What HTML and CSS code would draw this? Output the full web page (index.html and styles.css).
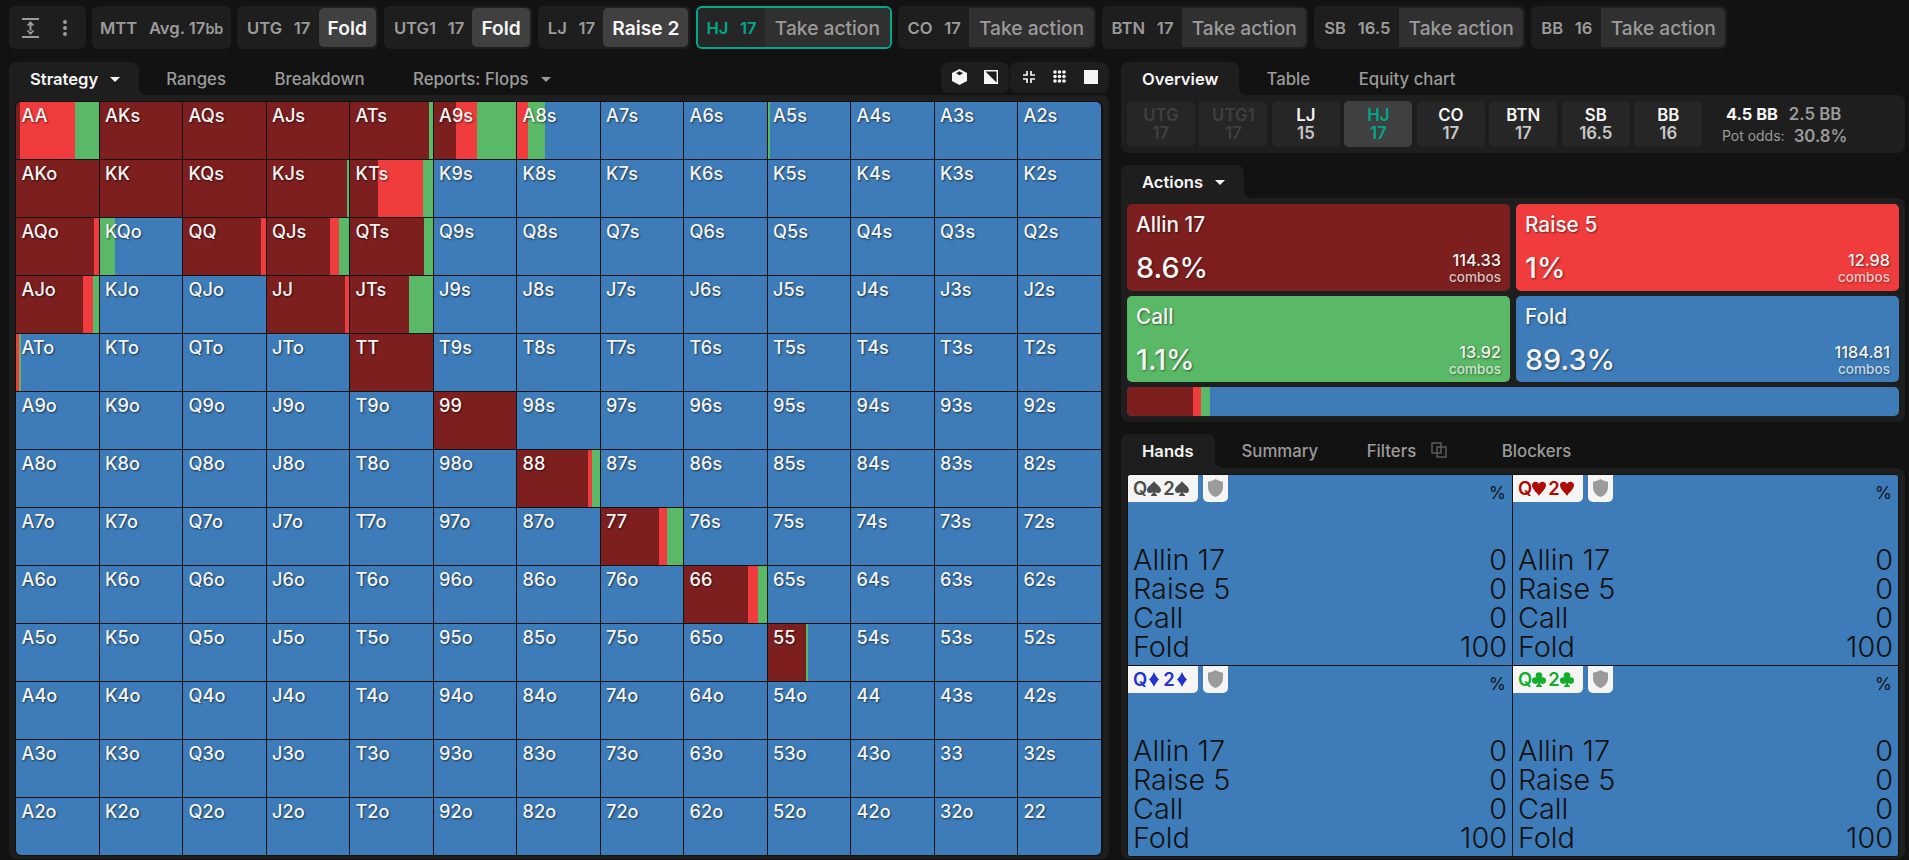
FILE: index.html
```html
<!DOCTYPE html>
<html lang="en">

<head>
    <meta charset="UTF-8">
    <meta name="viewport" content="width=device-width, initial-scale=1.0">
    <title>Strategy</title>
    <link rel="stylesheet" href="styles.css">
</head>

<body>
    <!-- Shared icons -->
    <svg class="sprite" width="0" height="0">
        <symbol id="spade" viewBox="0 0 14 15"><path d="M7 0C8 2.6 14 5.400 14 9.200c0 2.600-3.400 3.900-5.900 1.900.2 1.400.8 2.300 1.900 3V15H4v-.9c1.100-.7 1.700-1.600 1.900-3C3.400 13.100 0 11.800 0 9.200 0 5.400 6 2.600 7 0z"/></symbol>
        <symbol id="heart" viewBox="0 0 14 15"><path d="M7 15C6 12.500 0 8.500 0 4.300 0 .2 5.300-.5 7 3c1.700-3.500 7-2.800 7 1.300C14 8.500 8 12.500 7 15z"/></symbol>
        <symbol id="diamond" viewBox="0 0 14 15"><path d="M7 0c1.200 3 3 5.500 5 7.500-2 2-3.800 4.500-5 7.500-1.200-3-3-5.500-5-7.500C4 5.500 5.800 3 7 0z"/></symbol>
        <symbol id="club" viewBox="0 0 14 15"><circle cx="7" cy="3.600" r="3.300"/><circle cx="3.300" cy="8.600" r="3.300"/><circle cx="10.700" cy="8.600" r="3.300"/><path d="M5.500 5h3L8 11c.2 1.400.8 2.400 2 3.100V15H4v-.9c1.200-.7 1.800-1.700 2-3.100z"/></symbol>
        <symbol id="shield" viewBox="0 0 15 18"><path d="M7.500 0c2.300 1.500 4.700 2.300 7.500 2.700V8c0 4.700-2.600 8.300-7.500 10C2.600 16.300 0 12.700 0 8V2.700C2.800 2.300 5.200 1.500 7.500 0z"/></symbol>
    </svg>

    <!-- Action line -->
    <div class="topbar">
        <div class="pill tools">
            <svg width="17" height="20" viewBox="0 0 17 20" fill="#9b9b9b"><path d="M0 0h17v2H0zM0 18h17v2H0zM7.500 6h2v8h-2zM8.500 3l4 4.500h-8zM8.500 17l4-4.500h-8z"/></svg>
            <svg width="4" height="16" viewBox="0 0 4 16" fill="#9b9b9b"><circle cx="2" cy="2" r="2"/><circle cx="2" cy="8" r="2"/><circle cx="2" cy="14" r="2"/></svg>
        </div>
        <div class="pill mtt"><b>MTT</b><b>Avg. 17<small>bb</small></b></div>
        <div class="pill"><b>UTG</b><b>17</b><span class="move done">Fold</span></div>
        <div class="pill"><b>UTG1</b><b>17</b><span class="move done">Fold</span></div>
        <div class="pill"><b>LJ</b><b>17</b><span class="move done">Raise 2</span></div>
        <div class="pill current"><b>HJ</b><b>17</b><span class="move">Take action</span></div>
        <div class="pill"><b>CO</b><b>17</b><span class="move">Take action</span></div>
        <div class="pill"><b>BTN</b><b>17</b><span class="move">Take action</span></div>
        <div class="pill"><b>SB</b><b>16.5</b><span class="move">Take action</span></div>
        <div class="pill"><b>BB</b><b>16</b><span class="move">Take action</span></div>
    </div>

    <div class="main">
        <div class="left">
            <div class="tabs">
                <div class="tab active with-caret">Strategy <i class="caret"></i></div>
                <div class="tab">Ranges</div>
                <div class="tab">Breakdown</div>
                <div class="tab">Reports: Flops <i class="caret"></i></div>
                <div class="view-group first">
                    <svg width="15" height="16" viewBox="0 0 15 16"><path d="M7.500 0 15 4v8l-7.500 4L0 12V4z" fill="#f5f5f5"/><path d="M7.500 2.300 11 4.200 7.500 6.200 4 4.200z" fill="#1e1e1e"/></svg>
                    <svg width="14" height="14" viewBox="0 0 14 14"><path d="M.7.700h12.600v12.600H.7z" fill="none" stroke="#f5f5f5" stroke-width="1.400"/><path d="M0 0l14 14H0z" fill="#f5f5f5"/></svg>
                </div>
                <div class="view-group">
                    <svg width="12" height="12" viewBox="0 0 12 12"><path d="M0 4h4V0M8 0v4h4M12 8H8v4M4 12V8H0" fill="none" stroke="#f5f5f5" stroke-width="1.700"/></svg>
                    <svg width="13" height="13" viewBox="0 0 13 13" fill="#f5f5f5"><circle cx="2" cy="2" r="1.800"/><circle cx="6.500" cy="2" r="1.800"/><circle cx="11" cy="2" r="1.800"/><circle cx="2" cy="6.500" r="1.800"/><circle cx="6.500" cy="6.500" r="1.800"/><circle cx="11" cy="6.500" r="1.800"/><circle cx="2" cy="11" r="1.800"/><circle cx="6.500" cy="11" r="1.800"/><circle cx="11" cy="11" r="1.800"/></svg>
                    <svg width="14" height="14" viewBox="0 0 14 14"><path d="M0 0h14v14H0z" fill="#f5f5f5"/></svg>
                </div>
            </div>
            <div class="panel grid-panel">
                <div class="hand-grid" id="hand-grid"></div>
            </div>
        </div>

        <div class="right">
            <div class="tabs">
                <div class="tab active">Overview</div>
                <div class="tab">Table</div>
                <div class="tab">Equity chart</div>
            </div>
            <div class="panel overview">
                <div class="seat out">UTG<span>17</span></div>
                <div class="seat out">UTG1<span>17</span></div>
                <div class="seat">LJ<span>15</span></div>
                <div class="seat hero">HJ<span>17</span></div>
                <div class="seat">CO<span>17</span></div>
                <div class="seat">BTN<span>17</span></div>
                <div class="seat">SB<span>16.5</span></div>
                <div class="seat">BB<span>16</span></div>
                <div class="pot">
                    <div class="pot-size"><b>4.5 BB</b><span>2.5 BB</span></div>
                    <div class="pot-odds">Pot odds:<b>30.8%</b></div>
                </div>
            </div>

            <div class="tabs actions-tabs">
                <div class="tab active with-caret">Actions <i class="caret"></i></div>
            </div>
            <div class="panel actions">
                <div class="action allin"><h3>Allin 17</h3><strong>8.6%</strong><p>114.33<span>combos</span></p></div>
                <div class="action raise"><h3>Raise 5</h3><strong>1%</strong><p>12.98<span>combos</span></p></div>
                <div class="action call"><h3>Call</h3><strong>1.1%</strong><p>13.92<span>combos</span></p></div>
                <div class="action fold"><h3>Fold</h3><strong>89.3%</strong><p>1184.81<span>combos</span></p></div>
                <div class="total-bar">
                    <div class="allin" style="width: 8.6%"></div>
                    <div class="raise" style="width: 1%"></div>
                    <div class="call" style="width: 1.1%"></div>
                </div>
            </div>

            <div class="tabs hands-tabs">
                <div class="tab active">Hands</div>
                <div class="tab">Summary</div>
                <div class="tab">Filters <svg class="copy" width="16" height="16" viewBox="0 0 16 16"><path d="M1 1h9v10H1zM6 5h9v10H6z" fill="none" stroke="#5c5c5c" stroke-width="1.500"/></svg></div>
                <div class="tab">Blockers</div>
            </div>
            <div class="panel hands-panel">
                <div class="combos" id="combos"></div>
            </div>
        </div>
    </div>

    <script src="script.js"></script>
</body>

</html>
```
FILE: script.js
```js
const ranks = "AKQJT98765432";

// cumulative stops in %: [allin, raise, call], the rest is fold
const strategy = {
    AA: [4.6, 71, 100], AKs: [100], AQs: [100], AJs: [100], ATs: [95, 95, 100],
    A9s: [27, 52.5, 100], A8s: [0, 13.4, 33.6], A5s: [0, 0, 2],
    AKo: [100], KK: [100], KQs: [100], KJs: [97, 97, 100], KTs: [34, 87.5, 100],
    AQo: [94, 100], KQo: [0, 0, 18], QQ: [94, 100], QJs: [76.5, 88, 100], QTs: [89, 89, 100],
    AJo: [80.6, 92.2, 100], JJ: [95, 100], JTs: [71, 71, 100],
    ATo: [0, 3.7, 6.5], TT: [100], 99: [100],
    88: [85.5, 90.4, 100], 77: [70.7, 80, 100], 66: [77, 88.7, 100], 55: [46, 46, 48.3]
};

function background(stops) {
    const names = ["allin", "raise", "call"];
    let from = 0;
    const parts = [];
    stops.forEach((to, i) => {
        if (to > from) parts.push(`var(--${names[i]}) ${from}% ${to}%`);
        from = to;
    });
    if (from < 100) parts.push(`var(--fold) ${from}% 100%`);
    return `linear-gradient(to right, ${parts.join(", ")})`;
}

const grid = document.getElementById("hand-grid");
for (let r = 0; r < 13; r++) {
    for (let c = 0; c < 13; c++) {
        const name = r === c ? ranks[r] + ranks[c] : c > r ? ranks[r] + ranks[c] + "s" : ranks[c] + ranks[r] + "o";
        const cell = document.createElement("div");
        cell.className = "cell";
        cell.textContent = name;
        if (strategy[name]) cell.style.background = background(strategy[name]);
        grid.appendChild(cell);
    }
}

document.getElementById("combos").innerHTML = ["spade", "heart", "diamond", "club"].map(suit => `
    <div class="combo">
        <div class="combo-head">
            <div class="cards ${suit}"><span>Q</span><svg><use href="#${suit}"/></svg><span>2</span><svg><use href="#${suit}"/></svg></div>
            <div class="blocker"><svg><use href="#shield"/></svg></div>
            <div class="unit">%</div>
        </div>
        <div class="row"><span>Allin 17</span><span>0</span></div>
        <div class="row"><span>Raise 5</span><span>0</span></div>
        <div class="row"><span>Call</span><span>0</span></div>
        <div class="row"><span>Fold</span><span>100</span></div>
    </div>`).join("");
```
FILE: styles.css
```css
:root {
    --allin: #7d1f1f;
    --raise: #f03c3c;
    --call: #5ab966;
    --fold: #3d7cb8;
    --panel: #1e1e1e;
    --teal: #00a88c;
}

* {
    box-sizing: border-box;
}

body {
    margin: 0;
    height: 860px;
    overflow: hidden;
    background-color: #121212;
    color: #f5f5f5;
    font-family: Inter, sans-serif;
    font-size: 16.8px;
}

.sprite {
    position: absolute;
}

/* Top bar */
.topbar {
    display: flex;
    gap: 6px;
    padding: 6px 9px 0;
    height: 49px;
}

.pill {
    display: flex;
    align-items: center;
    gap: 11.7px;
    height: 43px;
    padding: 0 2px 0 10px;
    background-color: var(--panel);
    border-radius: 6px;
    color: #9b9b9b;
    font-size: 16.6px;
    white-space: nowrap;
}

.pill b {
    font-weight: 600;
}

.pill small {
    font-size: 14.4px;
}

.tools {
    width: 77px;
    padding: 0 19px 0 13px;
    justify-content: space-between;
}

.mtt {
    width: 139px;
    padding: 0 0 0 8px;
}

.move {
    display: flex;
    align-items: center;
    height: 39px;
    margin-left: -3.5px;
    padding: 0 9.5px 0 10px;
    background-color: #303030;
    border-radius: 0 5px 5px 0;
    font-size: 19.2px;
    font-weight: 500;
}

.move.done {
    padding: 0 9px;
    background-color: #404040;
    border-radius: 5px;
    color: #f5f5f5;
    font-weight: 600;
}

.current {
    border: 2px solid var(--teal);
    background-color: #262626;
    padding: 0 0 0 8px;
}

.current b {
    color: var(--teal);
}

/* Tabs and panels */
.main {
    display: flex;
    gap: 12px;
    padding: 13px 4px 0 9px;
}

.left {
    width: 1100px;
}

.right {
    width: 784px;
}

.tabs {
    display: flex;
    height: 33px;
}

.tab {
    display: flex;
    align-items: center;
    padding: 0 21.5px;
    color: #9b9b9b;
    font-weight: 500;
    white-space: nowrap;
}

.tab + .tab {
    margin-left: 5.5px;
}

.tab.active {
    position: relative;
    padding: 0 21px;
    background-color: var(--panel);
    border-radius: 8px 8px 0 0;
    color: #f5f5f5;
    font-size: 16.6px;
    font-weight: 600;
}

.tab.with-caret {
    padding-right: 19px;
}

.tab.active::after {
    content: "";
    position: absolute;
    left: 100%;
    bottom: 0;
    width: 8px;
    height: 8px;
    background: radial-gradient(circle at 100% 0, transparent 8px, var(--panel) 8.5px);
}

.caret {
    margin: 2px 0 0 12px;
    border: 5px solid transparent;
    border-top-color: currentColor;
    border-bottom: 0;
}

.panel {
    background-color: var(--panel);
    border-radius: 0 8px 8px 8px;
}

.view-group {
    display: flex;
    align-items: center;
    justify-content: space-between;
    width: 99px;
    height: 31px;
    margin-left: 1px;
    padding: 0 11px 2px 13px;
    background-color: var(--panel);
    border-radius: 8px;
}

.view-group.first {
    width: 68px;
    margin-left: auto;
    padding: 0 11px 2px;
}

/* Hand grid */
.grid-panel {
    height: 764px;
    padding: 6px 6px 0;
}

.hand-grid {
    display: grid;
    grid-template-columns: repeat(13, 82.5px);
    grid-auto-rows: 57px;
    gap: 1px;
    padding: 1px;
    background-color: #121212;
    border-radius: 6px;
    overflow: hidden;
}

.cell {
    padding: 2px 5.5px;
    background-color: var(--fold);
    font-size: 18.2px;
    font-weight: 500;
    line-height: 22px;
    text-shadow: 1px 1px 2px rgba(0, 0, 0, 0.6);
}

.cell:first-child {
    border-top-left-radius: 5px;
}

.cell:nth-child(13) {
    border-top-right-radius: 5px;
}

.cell:nth-child(157) {
    border-bottom-left-radius: 5px;
}

.cell:last-child {
    border-bottom-right-radius: 5px;
}

/* Overview */
.overview {
    display: flex;
    gap: 4.7px;
    height: 58px;
    padding: 6px;
}

.seat {
    display: flex;
    flex-direction: column;
    justify-content: center;
    width: 67.8px;
    height: 46px;
    background-color: #262626;
    border-radius: 5px;
    font-weight: 600;
    line-height: 18px;
    text-align: center;
}

.seat span {
    color: #c8c8c8;
}

.seat.out,
.seat.out span {
    color: #404040;
}

.seat.hero {
    background-color: #404040;
}

.seat.hero,
.seat.hero span {
    color: var(--teal);
}

.pot {
    margin-left: 15px;
    color: #9b9b9b;
    font-weight: 600;
}

.pot-size {
    display: flex;
    gap: 11px;
    padding: 2px 0 0 4px;
    line-height: 22px;
}

.pot-size b {
    color: #f5f5f5;
    font-size: 16.4px;
    font-weight: 700;
}

.pot-odds {
    display: flex;
    gap: 9px;
    font-size: 14px;
    font-weight: 400;
    line-height: 22px;
}

.pot-odds b {
    font-size: 16.8px;
    font-weight: 600;
}

/* Actions */
.actions-tabs {
    margin-top: 12px;
}

.actions {
    display: grid;
    grid-template-columns: 1fr 1fr;
    grid-template-rows: 87px 86px 29px;
    gap: 5px 6px;
    height: 224px;
    padding: 6px 6px 0;
}

.allin {
    background-color: var(--allin);
}

.raise {
    background-color: var(--raise);
}

.call {
    background-color: var(--call);
}

.fold {
    background-color: var(--fold);
}

.action {
    display: grid;
    grid-template-columns: 1fr auto;
    grid-template-rows: 40px 1fr;
    padding: 0 9px;
    border-radius: 5px;
    text-shadow: 1px 1px 2px rgba(0, 0, 0, 0.5);
}

.action h3 {
    grid-column: span 2;
    margin: 0;
    font-size: 20.8px;
    font-weight: 500;
    line-height: 41px;
}

.action strong {
    font-size: 28.8px;
    font-weight: 500;
    line-height: 48px;
}

.action p {
    margin: 7px 0 0;
    font-size: 16.3px;
    font-weight: 500;
    line-height: 18px;
    text-align: right;
}

.action span {
    display: block;
    font-size: 13.6px;
    line-height: 17px;
    opacity: 0.75;
}

.total-bar {
    display: flex;
    grid-column: span 2;
    background-color: var(--fold);
    border-radius: 5px;
    overflow: hidden;
}

/* Hands */
.hands-tabs {
    margin-top: 12px;
    height: 34px;
}

.copy {
    margin: 0 6px 2px 15px;
}

.hands-panel {
    height: 391px;
    padding: 6px 6px 0;
}

.combos {
    display: grid;
    grid-template-columns: 384px 385px;
    grid-template-rows: 190px 190px;
    gap: 1px;
    padding: 1px;
    background-color: #121212;
    border-radius: 6px;
    overflow: hidden;
}

.combo {
    background-color: var(--fold);
    color: #121212;
}

.combo-head {
    display: flex;
    align-items: flex-start;
    gap: 5px;
    height: 70px;
}

.cards,
.blocker {
    display: flex;
    align-items: center;
    height: 27px;
    background-color: #f5f5f5;
    border-radius: 0 0 5px 5px;
}

.cards {
    width: 70px;
    padding: 0 0 1px 5px;
    border-bottom-left-radius: 0;
    font-size: 18.4px;
    font-weight: 600;
}

.cards svg {
    width: 14px;
    height: 15px;
    fill: currentColor;
}

.cards svg + span {
    margin-left: 2px;
}

.spade {
    color: #4d4d4d;
}

.heart {
    color: #ad0c05;
}

.diamond {
    color: #2433c8;
}

.club {
    color: #14ad2b;
}

.blocker {
    width: 25px;
    padding-bottom: 1px;
    justify-content: center;
}

.blocker svg {
    width: 15px;
    height: 18px;
    fill: #9b9b9b;
}

.unit {
    margin: 8px 6px 0 auto;
    font-size: 17.2px;
    line-height: 20px;
}

.row {
    display: flex;
    justify-content: space-between;
    padding: 0 5px;
    font-size: 28.8px;
    font-weight: 300;
    line-height: 29px;
}
```
